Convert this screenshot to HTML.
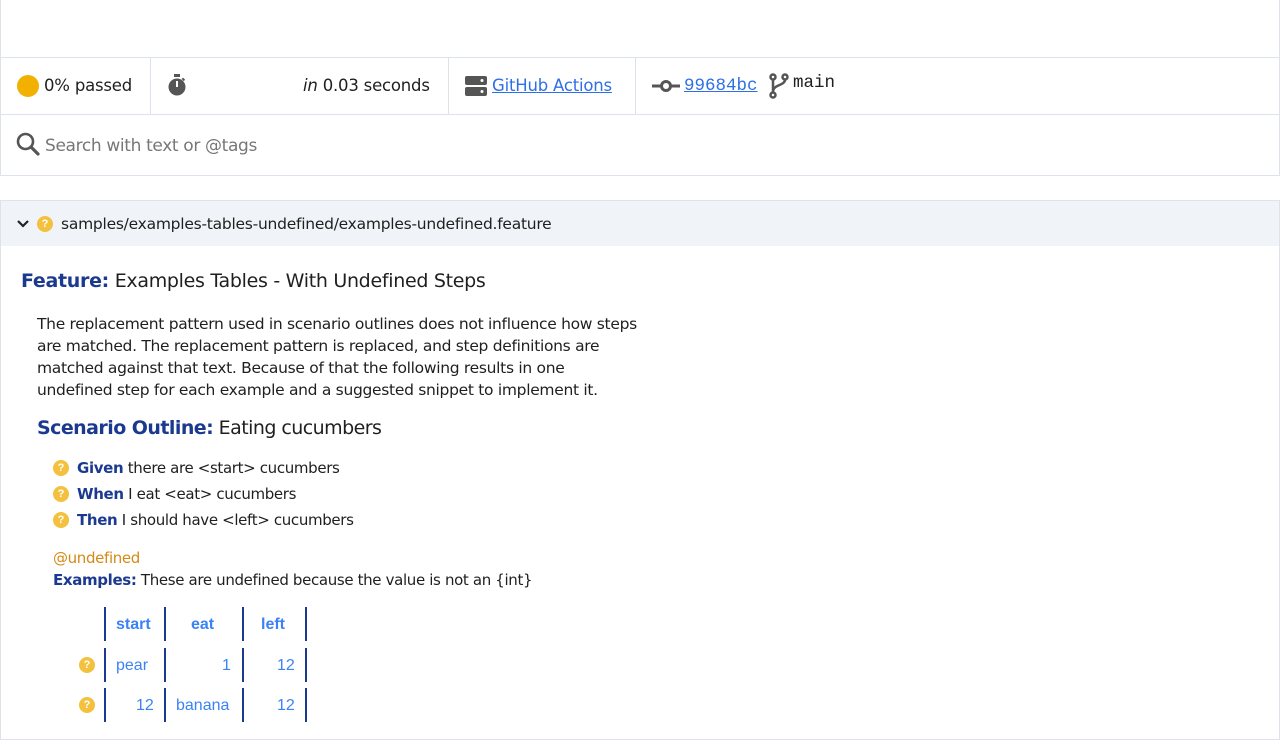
<!DOCTYPE html>
<html><head><meta charset="utf-8"><style>
*{box-sizing:border-box;margin:0;padding:0}
body{width:1280px;height:720px;overflow:hidden;background:#fff;font-family:"DejaVu Sans","Liberation Sans",sans-serif;color:#1f1f1f;position:relative}
.a{position:absolute;white-space:nowrap}
.b{border:1px solid #dde3ea}
.kw{color:#1b3a8f;font-weight:bold}
.q{position:absolute;width:16px;height:16px;border-radius:50%;background:#f4c13e;color:#fff;font-size:11px;font-weight:bold;text-align:center;line-height:16px;font-family:"Liberation Sans",sans-serif}
.t{font-size:15.5px;letter-spacing:-0.35px}
.s{font-size:15px;letter-spacing:-0.35px}
.top{font-size:16.5px;letter-spacing:-0.2px}
.cell{position:absolute;border-left:2px solid #1b3a8f;height:34px}
.tb{color:#3b82f6;font-size:16px;font-family:"Liberation Sans",sans-serif}
a{color:#2f6fe6}
</style></head><body>
<div class="a b" style="left:0;top:0;width:1280px;height:58px;border-top:none"></div>
<div class="a b" style="left:0;top:57px;width:1280px;height:58px"></div>
<div class="a" style="left:150px;top:58px;width:1px;height:56px;background:#dde3ea"></div>
<div class="a" style="left:448px;top:58px;width:1px;height:56px;background:#dde3ea"></div>
<div class="a" style="left:635px;top:58px;width:1px;height:56px;background:#dde3ea"></div>
<div class="a" style="left:17px;top:75px;width:22px;height:22px;border-radius:50%;background:#f2b000"></div>
<div class="a top" style="left:44px;top:76px">0% passed</div>
<svg class="a" style="left:166px;top:73px" width="22" height="24" viewBox="0 0 22 24"><rect x="8" y="1" width="6" height="3" fill="#555"/><circle cx="11" cy="14" r="8.5" fill="#555"/><rect x="10" y="8" width="2" height="6" fill="#fff"/><rect x="16" y="5" width="3" height="2" transform="rotate(45 17 6)" fill="#555"/></svg>
<div class="a top" style="left:303px;top:76px"><i>in</i> 0.03 seconds</div>
<svg class="a" style="left:465px;top:76px" width="22" height="20" viewBox="0 0 22 20"><rect x="0" y="0" width="22" height="9" rx="2" fill="#555"/><rect x="0" y="11" width="22" height="9" rx="2" fill="#555"/><circle cx="17" cy="4.5" r="1.5" fill="#fff"/><circle cx="17" cy="15.5" r="1.5" fill="#fff"/></svg>
<div class="a top" style="left:492px;top:76px"><a style="text-decoration:underline">GitHub Actions</a></div>
<svg class="a" style="left:652px;top:78px" width="28" height="16" viewBox="0 0 28 16"><rect x="0" y="6.5" width="28" height="3" fill="#555"/><circle cx="14" cy="8" r="6" fill="#555"/><circle cx="14" cy="8" r="3" fill="#fff"/></svg>
<div class="a" style="left:684px;top:76px;font-size:17.5px;font-family:'Liberation Mono',monospace"><a style="text-decoration:underline">99684bc</a></div>
<svg class="a" style="left:768px;top:73px" width="22" height="26" viewBox="0 0 22 26"><g fill="none" stroke="#555" stroke-width="2.5"><circle cx="5" cy="4" r="2.5"/><circle cx="5" cy="22" r="2.5"/><circle cx="17" cy="4" r="2.5"/><path d="M5 6.5V19.5M17 6.5C17 13 5 11 5 19"/></g></svg>
<div class="a" style="left:793px;top:73px;font-size:17.5px;font-family:'Liberation Mono',monospace">main</div>
<div class="a b" style="left:0;top:114px;width:1280px;height:62px"></div>
<svg class="a" style="left:16px;top:132px" width="24" height="24" viewBox="0 0 24 24"><circle cx="9.5" cy="9.5" r="7.5" fill="none" stroke="#555" stroke-width="2.6"/><path d="M15 15L22 22" stroke="#555" stroke-width="3.2" stroke-linecap="round"/></svg>
<div class="a t" style="left:45px;top:136px;font-size:17px;color:#777">Search with text or @tags</div>
<div class="a b" style="left:0;top:200px;width:1280px;height:540px"></div>
<div class="a" style="left:1px;top:201px;width:1278px;height:45px;background:#f0f4f9"></div>
<svg class="a" style="left:16px;top:219px" width="14" height="10" viewBox="0 0 14 10"><path d="M2 2L7 7L12 2" fill="none" stroke="#222" stroke-width="2.2"/></svg>
<div class="q" style="left:37px;top:216px">?</div>
<div class="a t" style="left:61px;top:215px;letter-spacing:-0.25px">samples/examples-tables-undefined/examples-undefined.feature</div>
<div class="a" style="left:21px;top:270px;font-size:19px;letter-spacing:-0.3px"><span class="kw">Feature:</span> Examples Tables - With Undefined Steps</div>
<div class="a t" style="left:37px;top:313px;line-height:22px;letter-spacing:-0.3px">The replacement pattern used in scenario outlines does not influence how steps<br>are matched. The replacement pattern is replaced, and step definitions are<br>matched against that text. Because of that the following results in one<br>undefined step for each example and a suggested snippet to implement it.</div>
<div class="a" style="left:37px;top:417px;font-size:19px;letter-spacing:-0.55px"><span class="kw">Scenario Outline:</span> Eating cucumbers</div>
<div class="q" style="left:53px;top:460px">?</div><div class="a s" style="left:77px;top:459px"><span class="kw">Given</span> there are &lt;start&gt; cucumbers</div>
<div class="q" style="left:53px;top:486px">?</div><div class="a s" style="left:77px;top:485px"><span class="kw">When</span> I eat &lt;eat&gt; cucumbers</div>
<div class="q" style="left:53px;top:512px">?</div><div class="a s" style="left:77px;top:511px"><span class="kw">Then</span> I should have &lt;left&gt; cucumbers</div>
<div class="a s" style="left:53px;top:549px;color:#d58a16">@undefined</div>
<div class="a s" style="left:53px;top:571px"><span class="kw">Examples:</span> These are undefined because the value is not an {int}</div>
<div class="cell" style="left:104px;top:607px"></div><div class="cell" style="left:164px;top:607px"></div><div class="cell" style="left:242px;top:607px"></div><div class="cell" style="left:305px;top:607px"></div>
<div class="a tb" style="left:116px;top:616px;font-weight:bold">start</div>
<div class="a tb" style="left:191px;top:616px;font-weight:bold">eat</div>
<div class="a tb" style="left:261px;top:616px;font-weight:bold">left</div>
<div class="cell" style="left:104px;top:648px"></div><div class="cell" style="left:164px;top:648px"></div><div class="cell" style="left:242px;top:648px"></div><div class="cell" style="left:305px;top:648px"></div>
<div class="q" style="left:79px;top:657px">?</div>
<div class="a tb" style="left:116px;top:657px">pear</div>
<div class="a tb" style="left:222px;top:657px">1</div>
<div class="a tb" style="left:277px;top:657px">12</div>
<div class="cell" style="left:104px;top:688px"></div><div class="cell" style="left:164px;top:688px"></div><div class="cell" style="left:242px;top:688px"></div><div class="cell" style="left:305px;top:688px"></div>
<div class="q" style="left:79px;top:697px">?</div>
<div class="a tb" style="left:136px;top:697px">12</div>
<div class="a tb" style="left:176px;top:697px">banana</div>
<div class="a tb" style="left:277px;top:697px">12</div>
</body></html>
